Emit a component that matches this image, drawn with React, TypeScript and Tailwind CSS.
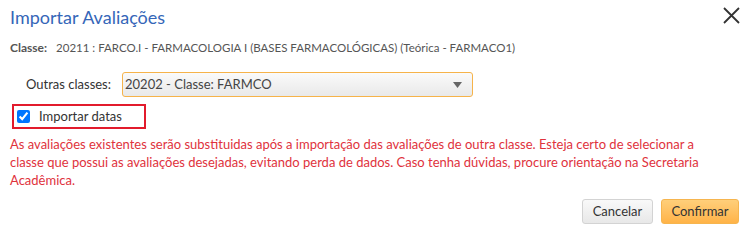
import { useState } from 'react'

export default function App() {
  const [checked, setChecked] = useState(true)

  return (
    <div
      className="w-[749px] h-[230px] bg-white relative overflow-hidden"
      style={{ fontFamily: 'Lato, "Open Sans", "Liberation Sans", sans-serif' }}
    >
      <div className="flex items-start justify-between pl-[10px] pr-[8px] pt-[5px]">
        <h1 className="text-[18px] leading-[24px] text-[#3566b8] font-normal">Importar Avaliações</h1>
        <button className="mt-[1px] text-[#333] bg-transparent border-none p-0" aria-label="Fechar">
          <svg width="19" height="19" viewBox="0 0 19 19" fill="none" stroke="currentColor" strokeWidth="1.8">
            <path d="M2 2 L17 17 M17 2 L2 17" />
          </svg>
        </button>
      </div>

      <div className="pl-[10px] mt-[11px] text-[11.5px] leading-[16px] text-[#555]">
        <span className="font-bold text-[12px] text-[#555]">Classe:</span>
        <span className="ml-[9px]">20211 : FARCO.I - FARMACOLOGIA I (BASES FARMACOLÓGICAS) (Teórica - FARMACO1)</span>
      </div>

      <div className="flex items-center mt-[16px] pl-[26px] gap-[11px]">
        <label className="text-[13px] text-[#333]">Outras classes:</label>
        <div className="w-[351px] h-[25px] rounded-[3px] border border-[#f6b34a] bg-gradient-to-b from-[#fafafa] to-[#e9e9e9] flex items-center justify-between pl-[2px] pr-[10px]">
          <span className="text-[13px] font-normal text-[#444]">20202 - Classe: FARMCO</span>
          <svg width="9" height="6" viewBox="0 0 9 6">
            <path d="M0 0 L9 0 L4.5 6 Z" fill="#666" />
          </svg>
        </div>
      </div>

      <div className="ml-[12px] mt-[7px] w-[134px] h-[25px] border-2 border-[#e21b2c] flex items-center pl-[3px] gap-[9px]">
        <input
          type="checkbox"
          checked={checked}
          onChange={() => setChecked(!checked)}
          className="w-[13px] h-[13px] m-0 accent-[#0075ff]"
        />
        <span className="text-[13px] text-[#333]">Importar datas</span>
      </div>

      <p className="pl-[10px] pr-[30px] mt-[6px] text-[13px] leading-[18px] text-[#e0323c]">
        As avaliações existentes serão substituidas após a importação das avaliações de outra classe. Esteja certo de
        selecionar a classe que possui as avaliações desejadas, evitando perda de dados. Caso tenha dúvidas, procure
        orientação na Secretaria Acadêmica.
      </p>

      <div className="absolute right-[10px] bottom-[6px] flex gap-[8px]">
        <button className="w-[71px] h-[25px] rounded-[3px] border border-[#d3d3d3] bg-gradient-to-b from-[#f9f9f9] to-[#e8e8e8] text-[13px] text-[#333]">
          Cancelar
        </button>
        <button className="w-[78px] h-[25px] rounded-[3px] border border-[#f6b54f] bg-gradient-to-b from-[#ffcf7a] to-[#ffb347] text-[13px] text-[#333]">
          Confirmar
        </button>
      </div>
    </div>
  )
}
